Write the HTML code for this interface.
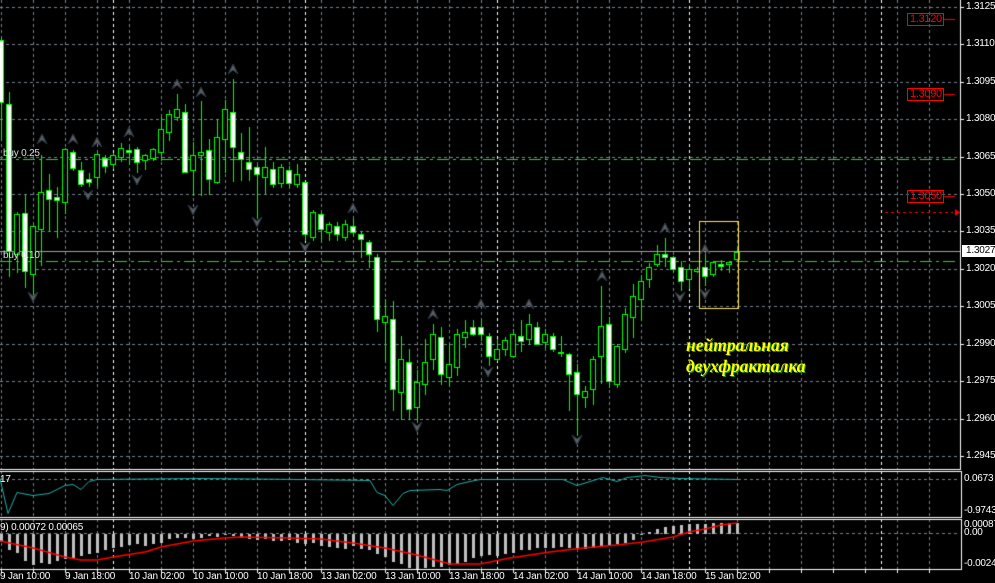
<!DOCTYPE html>
<html><head><meta charset="utf-8">
<style>
html,body{margin:0;padding:0;background:#000;width:995px;height:582px;overflow:hidden}
#c{position:absolute;left:0;top:0}
.t{position:absolute;font-family:"Liberation Sans",sans-serif;font-size:10px;letter-spacing:-0.2px;color:#fff;line-height:12px;white-space:nowrap}
.r{color:#ff0000;border:1px solid #ff0000;width:33px;height:11px;padding:0 0 0 2px;font-size:11px;line-height:11px;letter-spacing:-0.3px}
.y{position:absolute;font-family:"Liberation Serif","DejaVu Serif",serif;font-style:italic;font-weight:bold;font-size:17.5px;color:#ffff00;text-shadow:1px 1px 0 #228b22;white-space:nowrap;line-height:18px}
</style></head><body>
<canvas id="c" width="995" height="582"></canvas>
<div class="t" style="left:966px;top:1px">1.3125</div>
<div class="t" style="left:966px;top:38px">1.3110</div>
<div class="t" style="left:966px;top:76px">1.3095</div>
<div class="t" style="left:966px;top:113px">1.3080</div>
<div class="t" style="left:966px;top:151px">1.3065</div>
<div class="t" style="left:966px;top:188px">1.3050</div>
<div class="t" style="left:966px;top:225px">1.3035</div>
<div class="t" style="left:966px;top:263px">1.3020</div>
<div class="t" style="left:966px;top:300px">1.3005</div>
<div class="t" style="left:966px;top:338px">1.2990</div>
<div class="t" style="left:966px;top:375px">1.2975</div>
<div class="t" style="left:966px;top:413px">1.2960</div>
<div class="t" style="left:966px;top:450px">1.2945</div>
<div class="t" style="left:962px;top:245px;background:#fff;color:#000;padding:0 4px 0 4px">1.3027</div>
<div class="t r" style="left:907px;top:13px">1.3120</div>
<div class="t r" style="left:907px;top:88px">1.3090</div>
<div class="t r" style="left:907px;top:190px">1.3050</div>
<div class="t" style="left:3px;top:148px;color:#ddd">buy 0.25</div>
<div class="t" style="left:3px;top:250px;color:#ddd">buy 0.10</div>
<div class="t" style="left:0px;top:474px">17</div>
<div class="t" style="left:0px;top:522px">9) 0.00072 0.00065</div>
<div class="t" style="left:964px;top:473px">0.0673</div>
<div class="t" style="left:964px;top:505px">-0.9743</div>
<div class="t" style="left:964px;top:519px">0.00087</div>
<div class="t" style="left:964px;top:527px">0.00</div>
<div class="t" style="left:964px;top:558px">-0.0024</div>
<div class="t" style="left:0px;top:571px">9 Jan 10:00</div>
<div class="t" style="left:65px;top:571px">9 Jan 18:00</div>
<div class="t" style="left:129px;top:571px">10 Jan 02:00</div>
<div class="t" style="left:193px;top:571px">10 Jan 10:00</div>
<div class="t" style="left:257px;top:571px">10 Jan 18:00</div>
<div class="t" style="left:321px;top:571px">13 Jan 02:00</div>
<div class="t" style="left:385px;top:571px">13 Jan 10:00</div>
<div class="t" style="left:449px;top:571px">13 Jan 18:00</div>
<div class="t" style="left:513px;top:571px">14 Jan 02:00</div>
<div class="t" style="left:577px;top:571px">14 Jan 10:00</div>
<div class="t" style="left:641px;top:571px">14 Jan 18:00</div>
<div class="t" style="left:705px;top:571px">15 Jan 02:00</div>
<div class="y" style="left:686px;top:336px">нейтральная</div>
<div class="y" style="left:686px;top:357px">двухфракталка</div>
<script>
var c=document.getElementById('c').getContext('2d');
function line(x1,y1,x2,y2,col,dash,w){c.beginPath();c.strokeStyle=col;c.lineWidth=w||1;c.setLineDash(dash||[]);c.moveTo(x1,y1);c.lineTo(x2,y2);c.stroke();c.setLineDash([]);}
var G='#708090';
var hy=[7,44,82,119,157,194,231,269,306,344,381,419,456];
hy.forEach(function(y){line(0,y+.5,960,y+.5,G,[3,3]);line(960,y+.5,964,y+.5,'#fff');});
for(var x=1;x<960;x+=32){[[0,469],[471,517],[519,569]].forEach(function(p){line(x+.5,p[0],x+.5,p[1],G,[3,3]);});line(x+.5,569,x+.5,573,'#fff');}
for(var x=113;x<960;x+=192){[[0,469],[471,517],[519,569]].forEach(function(p){line(x+.5,p[0],x+.5,p[1],'#fff',[3,3]);});}
line(0,479.5,960,479.5,G,[3,3]);line(0,533.5,960,533.5,G,[3,3]);
line(0,469.5,961,469.5,'#fff');line(0,471.5,961,471.5,'#fff');line(0,517.5,961,517.5,'#fff');line(0,519.5,961,519.5,'#fff');line(0,569.5,961,569.5,'#fff');
line(960.5,0,960.5,470,'#fff');line(961.5,471,961.5,518,'#fff');line(961.5,519,961.5,570,'#fff');
line(0,251.5,960,251.5,'#a0a0a0');
line(0,159.5,955,159.5,'#32cd32',[12,4,3,4]);line(0,261.5,955,261.5,'#32cd32',[12,4,3,4]);
line(885,212.5,953,212.5,'#ff0000',[3,3]);
c.fillStyle='#ff0000';c.beginPath();c.moveTo(960,212.5);c.lineTo(955,209);c.lineTo(955,216);c.fill();
[19,94,196].forEach(function(y){line(944,y+.5,955,y+.5,'#ff0000');});
var K=[['W',40,102,38,140],['W',104,251,92,276],['B',214,254,212,272],['W',213,271,195,287],['B',226,274,225,295],['B',192,229,155,265],['W',190,199,174,230],['W',197,200,187,237],['B',149,202,148,213],['W',152,168,150,170],['W',170,184,162,186],['W',179,182,173,186],['B',154,177,153,185],['W',158,166,155,172],['B',155,164,153,168],['B',148,157,143,161],['W',150,152,147,164],['W',149,162,147,172],['B',155,160,154,169],['B',149,158,148,160],['B',129,152,117,160],['B',114,132,110,140],['B',109,117,94,120],['W',112,172,104,172],['B',155,170,142,195],['B',152,155,101,195],['W',150,179,139,194],['B',137,182,119,183],['B',109,139,100,172],['W',112,147,79,181],['W',152,159,133,180],['W',162,169,127,180],['W',167,174,165,218],['B',167,177,147,193],['W',169,184,162,187],['B',167,183,164,187],['W',170,183,166,187],['B',174,184,164,187],['W',182,234,182,240],['B',212,237,210,240],['W',214,229,212,240],['B',224,232,222,240],['W',226,234,222,240],['B',224,237,220,240],['W',226,232,219,236],['W',234,239,231,257],['W',242,254,240,267],['W',257,319,254,331],['B',316,322,299,360],['W',319,389,301,410],['B',359,392,336,419],['W',362,409,349,419],['B',382,407,370,420],['B',362,384,339,394],['B',334,359,324,369],['W',337,374,327,384],['B',364,377,344,385],['B',334,367,329,375],['B',332,337,320,347],['W',327,334,320,335],['W',327,334,320,340],['W',336,356,333,365],['B',349,359,339,360],['B',340,349,337,355],['B',334,356,329,357],['W',336,341,320,351],['B',324,339,314,344],['W',327,344,322,344],['B',334,342,329,347],['W',336,349,333,351],['W',352,353,336,356],['W',354,374,353,410],['W',372,394,364,435],['B',391,397,386,407],['B',359,389,356,404],['B',326,356,286,383],['W',324,381,317,387],['B',346,384,344,387],['B',314,349,308,352],['B',296,317,284,337],['B',281,299,275,320],['B',267,279,263,287],['B',254,264,245,266],['W',254,257,238,266],['W',257,269,256,272],['W',267,281,261,290],['B',269,279,264,288],['B',269,271,267,272],['W',267,276,255,285],['B',262,274,261,276],['W',264,266,260,270],['B',262,264,262,272],['B',252,259,249,259]];
K.forEach(function(k,i){var x=1+8*i;line(x+.5,k[3],x+.5,k[4]+1,'#00ff00');
c.fillStyle=k[0]=='W'?'#fff':'#000';c.fillRect(x-2,k[1],5,Math.max(k[2]-k[1],1)+1);
c.strokeStyle='#00ff00';c.lineWidth=1;c.strokeRect(x-2.5,k[1]+.5,5,Math.max(k[2]-k[1],1));});
function fr(x,y,up){c.fillStyle='#5e5e5e';c.strokeStyle='#2a3a4a';c.lineWidth=1;c.beginPath();var s=up?1:-1;
c.moveTo(x,y-5*s);c.lineTo(x+5,y+5*s);c.lineTo(x,y+1*s);c.lineTo(x-5,y+5*s);c.closePath();c.fill();c.stroke();}
[[42,139],[73,139],[97,142],[129,132],[177,84],[201,92],[233,69],[353,208],[433,314],[481,304],[529,304],[602,276],[665,228],[705,249]].forEach(function(p){fr(p[0],p[1],true);});
[[33,297],[88,195],[137,180],[193,210],[257,222],[305,247],[417,427],[488,372],[577,440],[680,297],[705,294]].forEach(function(p){fr(p[0],p[1],false);});
c.strokeStyle='#ffe640';c.lineWidth=1;c.strokeRect(699.5,221.5,39,87);
var cy=[[0,478],[8,513],[17,492],[33,495],[49,493],[65,485],[73,484],[81,489],[89,481],[97,479],[200,478],[300,479],[370,480],[377,492],[385,495],[393,505],[403,493],[410,490],[440,489],[447,490],[457,484],[470,481],[480,479],[563,479],[577,485],[590,481],[603,477],[610,479],[617,481],[627,477],[637,476],[645,475],[660,477],[680,478],[737,479]];
c.strokeStyle='#20b2aa';c.beginPath();cy.forEach(function(p,i){i?c.lineTo(p[0],p[1]+.5):c.moveTo(p[0],p[1]+.5)});c.stroke();
var H=[8,16,19,27,31,29,30,27,25,24,22,20,19,16,14,13,11,10,12,10,9,5,4,4,5,4,2,3,1,2,3,5,6,5,7,7,6,9,10,9,12,13,14,15,12,15,16,20,23,28,30,34,35,34,33,33,31,30,28,24,22,21,22,20,19,16,16,14,14,14,13,14,15,15,14,12,12,10,9,6,1,-2,-5,-7,-8,-9,-10,-10,-10,-11,-11,-11,-11];
c.fillStyle='#c0c0c0';H.forEach(function(h,i){var x=8*i;if(h>=0)c.fillRect(x,534,3,h);else c.fillRect(x,534+h,3,-h);});
var sg=[[0,541],[33,548],[65,557],[81,560],[97,560],[113,557],[145,552],[161,547],[193,541],[225,538],[241,537],[289,538],[321,539],[353,543],[385,548],[417,555],[450,564],[480,564],[510,558],[550,552],[583,548],[617,545],[643,542],[673,537],[689,532],[705,529],[721,525],[737,523]];
c.strokeStyle='#ff0000';c.lineWidth=1.5;c.beginPath();sg.forEach(function(p,i){i?c.lineTo(p[0],p[1]):c.moveTo(p[0],p[1])});c.stroke();
</script>
</body></html>
